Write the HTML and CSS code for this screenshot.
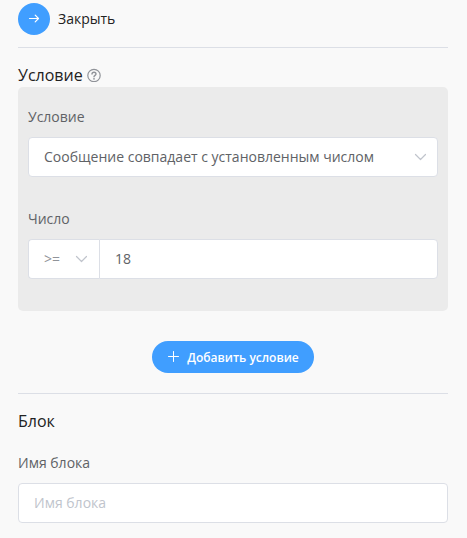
FILE: index.html
```html
<!DOCTYPE html>
<html lang="ru">
<head>
    <meta charset="UTF-8">
    <meta name="viewport" content="width=device-width, initial-scale=1.0">
    <title>Условие</title>
    <link rel="stylesheet" href="styles.css">
</head>
<body>
    <div class="panel">
        <!-- Закрыть панель -->
        <div class="panel-header">
            <button type="button" class="btn-circle" id="closeBtn" aria-labelledby="closeLabel">
                <svg width="12" height="12" viewBox="0 0 12 12" fill="none" stroke="currentColor" stroke-width="1.2" stroke-linecap="round" stroke-linejoin="round">
                    <path d="M1.5 5.5h9M7.2 2.2l3.3 3.3-3.3 3.3"/>
                </svg>
            </button>
            <label id="closeLabel" for="closeBtn" class="close-label">Закрыть</label>
        </div>

        <!-- Условие -->
        <section class="section">
            <h2 class="section-title">
                Условие
                <svg class="help-icon" width="14" height="14" viewBox="0 0 14 14" fill="none" stroke="currentColor" stroke-linecap="round">
                    <circle cx="7" cy="7.5" r="6.2" stroke-width="1.2"/>
                    <path d="M5 6.1c0-1.2.9-1.9 2-1.9s2 .7 2 1.8c0 1.3-2 1.4-2 2.8" stroke-width="1.4"/>
                    <circle cx="7" cy="10.8" r=".9" fill="currentColor" stroke="none"/>
                </svg>
            </h2>

            <div class="condition-box">
                <div class="form-item">
                    <label for="condition">Условие</label>
                    <div class="select">
                        <select id="condition">
                            <option>Сообщение совпадает с установленным числом</option>
                        </select>
                        <svg class="arrow" width="12" height="12" viewBox="0 0 12 12" fill="none" stroke="currentColor" stroke-width="1.2" stroke-linecap="round" stroke-linejoin="round">
                            <path d="M1.5 3.5l5 5 5-5"/>
                        </svg>
                    </div>
                </div>

                <div class="form-item">
                    <label for="number">Число</label>
                    <div class="input-group">
                        <div class="select select-prepend">
                            <select aria-label="Оператор">
                                <option>&gt;=</option>
                            </select>
                            <svg class="arrow" width="12" height="12" viewBox="0 0 12 12" fill="none" stroke="currentColor" stroke-width="1.2" stroke-linecap="round" stroke-linejoin="round">
                                <path d="M1.5 3.5l5 5 5-5"/>
                            </svg>
                        </div>
                        <input type="text" id="number" class="input" value="18">
                    </div>
                </div>
            </div>

            <div class="actions">
                <button type="button" class="btn-add">
                    <svg width="12" height="12" viewBox="0 0 12 12" fill="none" stroke="currentColor" stroke-linecap="round">
                        <path d="M6.5 .5v10M1.5 5.5h10"/>
                    </svg>
                    <span>Добавить условие</span>
                </button>
            </div>
        </section>

        <!-- Блок -->
        <section class="section">
            <h2 class="section-title">Блок</h2>
            <div class="form-item block-name">
                <label for="blockName">Имя блока</label>
                <input type="text" id="blockName" class="input" placeholder="Имя блока">
            </div>
        </section>
    </div>
</body>
</html>
```

FILE: styles.css
```css
* {
    margin: 0;
    padding: 0;
    box-sizing: border-box;
}

body {
    font-family: 'Open Sans', 'Noto Sans', sans-serif;
    font-size: 14px;
    color: #606266;
    background: #f9f9f9;
}

.panel {
    padding: 3px 19px 15px 18px;
}

/* Шапка */
.panel-header {
    display: flex;
    align-items: center;
    gap: 8px;
    padding-bottom: 12px;
}

.btn-circle {
    display: flex;
    align-items: center;
    justify-content: center;
    width: 32px;
    height: 32px;
    border: none;
    border-radius: 50%;
    background: #409eff;
    color: #fff;
    cursor: pointer;
}

.close-label {
    line-height: 18px;
    color: #222;
    cursor: pointer;
}

/* Секции */
.section {
    border-top: 1px solid #dcdfe6;
    padding-top: 15px;
}

.section-title {
    display: flex;
    align-items: center;
    gap: 4px;
    font-size: 16px;
    font-weight: 400;
    line-height: 24px;
    color: #222;
}

.help-icon {
    color: #909399;
}

.condition-box {
    padding: 10px;
    border-radius: 5px;
    background: #ebebeb;
}

/* Поля формы */
.form-item {
    margin-bottom: 22px;
}

.form-item label {
    display: block;
    line-height: 40px;
}

.block-name {
    margin-top: 10px;
    margin-bottom: 0;
}

.input,
.select select {
    display: block;
    width: 100%;
    height: 40px;
    padding: 0 15px 2px;
    border: 1px solid #dcdfe6;
    border-radius: 4px;
    background: #fff;
    color: #606266;
    font-family: inherit;
    font-size: 14px;
    outline: none;
}

.input:focus,
.select select:focus {
    border-color: #409eff;
}

.input::placeholder {
    color: #c0c4cc;
}

.select {
    position: relative;
}

.select select {
    appearance: none;
    padding-right: 30px;
    cursor: pointer;
}

.arrow {
    position: absolute;
    top: 14px;
    right: 12px;
    color: #c0c4cc;
    pointer-events: none;
}

.input-group {
    display: flex;
}

.select-prepend {
    flex: 0 0 71px;
}

.select-prepend select {
    border-right: none;
    border-radius: 4px 0 0 4px;
    color: #909399;
}

.input-group .input {
    flex: 1;
    min-width: 0;
    border-radius: 0 4px 4px 0;
}

/* Кнопка добавления */
.actions {
    display: flex;
    justify-content: center;
    padding: 30px 0 20px;
}

.btn-add {
    display: flex;
    align-items: center;
    gap: 8px;
    height: 32px;
    padding: 0 15px;
    border: none;
    border-radius: 20px;
    background: #409eff;
    color: #fff;
    font-family: inherit;
    font-size: 12px;
    font-weight: 600;
    cursor: pointer;
}

.btn-add:hover,
.btn-circle:hover {
    background: #66b1ff;
}
```
